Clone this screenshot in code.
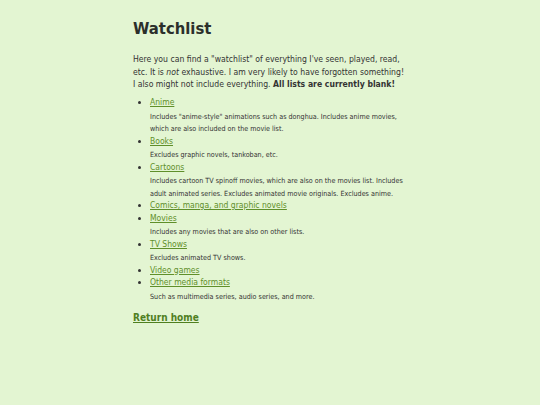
const items: { name: string; desc?: string }[] = [
  {
    name: "Anime",
    desc: 'Includes "anime-style" animations such as donghua. Includes anime movies, which are also included on the movie list.',
  },
  { name: "Books", desc: "Excludes graphic novels, tankoban, etc." },
  {
    name: "Cartoons",
    desc: "Includes cartoon TV spinoff movies, which are also on the movies list. Includes adult animated series. Excludes animated movie originals. Excludes anime.",
  },
  { name: "Comics, manga, and graphic novels" },
  { name: "Movies", desc: "Includes any movies that are also on other lists." },
  { name: "TV Shows", desc: "Excludes animated TV shows." },
  { name: "Video games" },
  { name: "Other media formats", desc: "Such as multimedia series, audio series, and more." },
];

export default function App() {
  return (
    <div
      className="min-h-[405px] w-full bg-[#e3f5d2] text-[#333333]"
      style={{ fontFamily: '"DejaVu Sans Condensed", "DejaVu Sans", sans-serif' }}
    >
      <div className="mx-auto w-[274px] pt-[18px]">
        <h1 className="text-[16.5px] font-bold leading-[22px] text-[#2b2f2b]">Watchlist</h1>
        <p className="mt-[13px] text-[8.6px] leading-[12.5px]">
          Here you can find a "watchlist" of everything I've seen, played, read, etc. It is{" "}
          <em>not</em> exhaustive. I am very likely to have forgotten something! I also might not
          include everything. <strong>All lists are currently blank!</strong>
        </p>
        <ul className="mt-[5.5px] list-disc pl-[17px] text-[8.5px] leading-[12.5px]">
          {items.map((it) => (
            <li key={it.name}>
              <a href="#" className="text-[#5f8f2a] underline">
                {it.name}
              </a>
              {it.desc && (
                <p className="mt-[2px] -mb-px text-[7.15px] leading-[12.5px]">{it.desc}</p>
              )}
            </li>
          ))}
        </ul>
        <a href="#" className="mt-[9px] block text-[10px] font-bold leading-[14px] text-[#4f7f1f] underline">
          Return home
        </a>
      </div>
    </div>
  );
}
